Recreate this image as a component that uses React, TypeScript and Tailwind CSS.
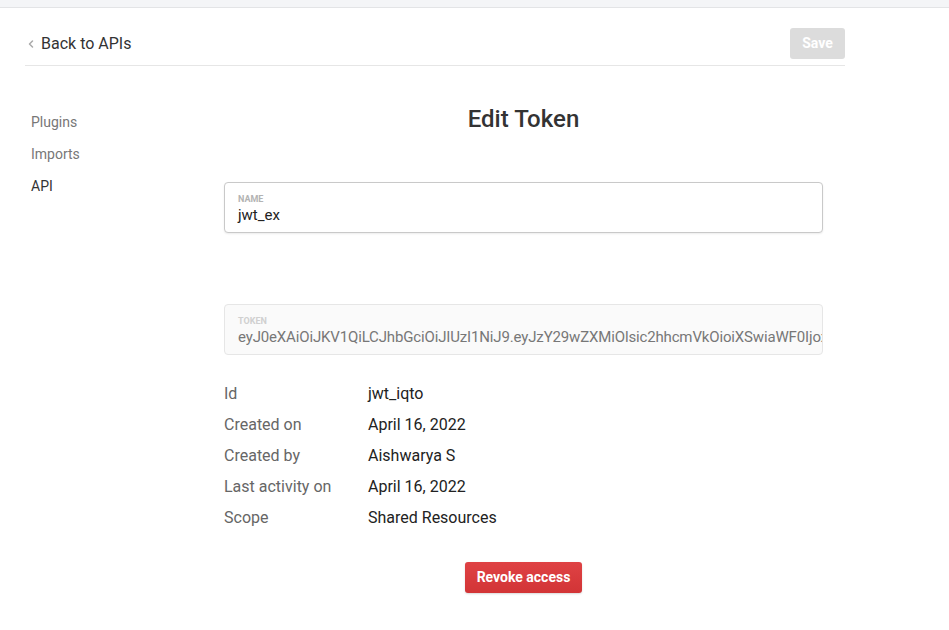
import { ChevronLeft } from 'lucide-react';

const details = [
  { label: 'Id', value: 'jwt_iqto' },
  { label: 'Created on', value: 'April 16, 2022' },
  { label: 'Created by', value: 'Aishwarya S' },
  { label: 'Last activity on', value: 'April 16, 2022' },
  { label: 'Scope', value: 'Shared Resources' },
];

const navItems = [
  { name: 'Plugins', active: false },
  { name: 'Imports', active: false },
  { name: 'API', active: true },
];

const token =
  'eyJ0eXAiOiJKV1QiLCJhbGciOiJIUzI1NiJ9.eyJzY29wZXMiOlsic2hhcmVkOioiXSwiaWF0IjoxNjUwMTAyNzY4LCJqdGkiOiJqd3RfaXF0byJ9.kq2s8dPq';

export default function App() {
  return (
    <div className="min-h-screen bg-white" style={{ fontFamily: 'Roboto, "Liberation Sans", sans-serif' }}>
      {/* top strip */}
      <div className="h-[8px] bg-[#f4f5f7] border-b border-[#e3e4e6]" />

      <div className="ml-[25px] w-[820px]">
        {/* header */}
        <header className="flex items-center justify-between pt-[20px] pb-[6px] border-b border-[#e6e6e6]">
          <button className="flex items-center gap-[4px] text-[16px] text-[#333]">
            <ChevronLeft className="w-[12px] h-[12px] text-[#aaa]" strokeWidth={3} />
            Back to APIs
          </button>
          <button className="w-[55px] h-[31px] rounded-[3px] bg-[#dcdcdc] text-white text-[14px] font-bold">
            Save
          </button>
        </header>

        <div className="flex">
          {/* sidebar */}
          <nav className="w-[199px] pl-[6px] pt-[46px] flex flex-col gap-[12px]">
            {navItems.map((item) => (
              <div
                key={item.name}
                className={`text-[14px] leading-[20px] ${item.active ? 'text-[#333]' : 'text-[#777]'}`}
              >
                {item.name}
              </div>
            ))}
          </nav>

          {/* main */}
          <main className="w-[599px] pt-[37px] flex flex-col">
            <h1 className="text-center text-[24px] leading-[32px] font-medium text-[#333]">Edit Token</h1>

            <div className="mt-[47px] h-[51px] rounded-[4px] border border-[#c9c9c9] bg-white shadow-[0_1px_2px_rgba(0,0,0,0.08)] px-[13px] pt-[11px]">
              <div className="text-[9px] leading-[11px] font-bold text-[#b3b3b3]">NAME</div>
              <div className="text-[15px] leading-[20px] text-[#222]">jwt_ex</div>
            </div>

            <div className="mt-[71px] h-[51px] rounded-[4px] border border-[#e6e6e6] bg-[#fafafa] pl-[13px] pt-[11px] overflow-hidden">
              <div className="text-[9px] leading-[11px] font-bold text-[#d0d0d0]">TOKEN</div>
              <div className="text-[15px] leading-[20px] tracking-[-0.15px] text-[#777] whitespace-nowrap overflow-hidden">
                {token}
              </div>
            </div>

            <div className="mt-[23px] flex flex-col">
              {details.map((d) => (
                <div key={d.label} className="flex text-[16px] leading-[31px]">
                  <span className="w-[144px] text-[#666]">{d.label}</span>
                  <span className="text-[#222]">{d.value}</span>
                </div>
              ))}
            </div>

            <div className="mt-[29px] flex justify-center">
              <button className="w-[117px] h-[31px] rounded-[3px] bg-[#da3a3c] bg-gradient-to-b from-[#df4244] to-[#d23436] text-white text-[14px] font-bold shadow-[0_1px_2px_rgba(0,0,0,0.15)]">
                Revoke access
              </button>
            </div>
          </main>
        </div>
      </div>
    </div>
  );
}
